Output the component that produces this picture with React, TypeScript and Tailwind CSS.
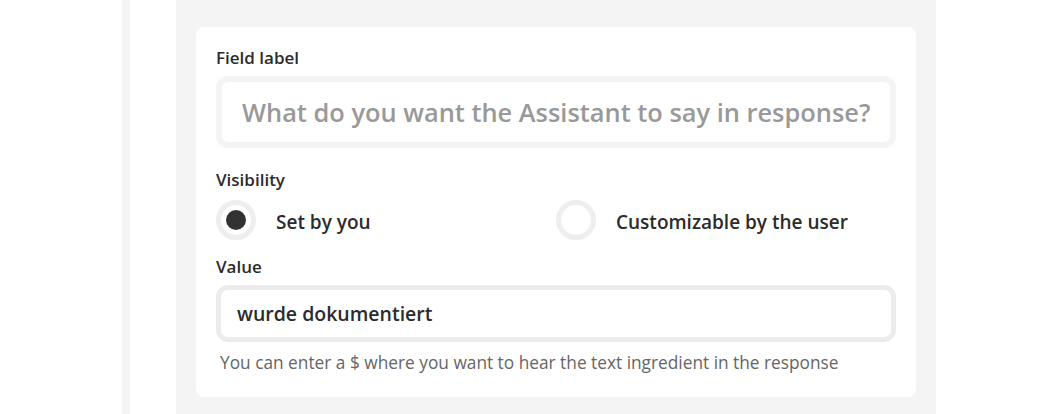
import React from 'react';

const font = { fontFamily: '"Open Sans", "Noto Sans", sans-serif' };

function Radio({ checked, label }: { checked?: boolean; label: string }) {
  return (
    <label className="flex items-center gap-5 cursor-pointer">
      <span className="flex h-10 w-10 items-center justify-center rounded-full border-[5px] border-[#eeeeee] bg-white">
        {checked && <span className="h-5 w-5 rounded-full bg-[#333333]" />}
      </span>
      <span className="text-[19px] font-semibold text-[#2b2b2b] leading-7 pt-[3px]">{label}</span>
    </label>
  );
}

export default function App() {
  return (
    <div className="flex h-[414px] w-[1060px] bg-white overflow-hidden" style={font}>
      <div className="w-[122px]" />
      <div className="w-2 bg-[#f4f4f4]" />
      <div className="w-[46px]" />
      <div className="w-[760px] bg-[#f4f4f4] px-5 pt-[27px]">
        <div className="rounded-lg bg-white px-5 pt-[19px] pb-[22px]">
          <div className="text-[17px] font-semibold text-[#2b2b2b] leading-6">Field label</div>
          <div className="mt-[6px] flex h-[72px] items-center rounded-xl border-[6px] border-[#f4f4f4] px-5">
            <input
              className="w-full bg-transparent text-[25.4px] font-semibold text-[#2b2b2b] outline-none placeholder:text-[#999999]"
              placeholder="What do you want the Assistant to say in response?"
            />
          </div>
          <div className="mt-5 text-[17px] font-semibold text-[#2b2b2b] leading-6">Visibility</div>
          <div className="mt-2 grid grid-cols-2">
            <Radio checked label="Set by you" />
            <Radio label="Customizable by the user" />
          </div>
          <div className="mt-[15px] text-[17px] font-semibold text-[#2b2b2b] leading-6">Value</div>
          <div className="mt-[6px] flex h-[57px] items-center rounded-xl border-[5px] border-[#ececec] px-4">
            <input
              className="w-full bg-transparent text-[19.5px] font-semibold text-[#2b2b2b] outline-none"
              defaultValue="wurde dokumentiert"
            />
          </div>
          <p className="mt-[9px] pl-1 text-[17.3px] text-[#666666] leading-6">
            You can enter a $ where you want to hear the text ingredient in the response
          </p>
        </div>
      </div>
    </div>
  );
}
